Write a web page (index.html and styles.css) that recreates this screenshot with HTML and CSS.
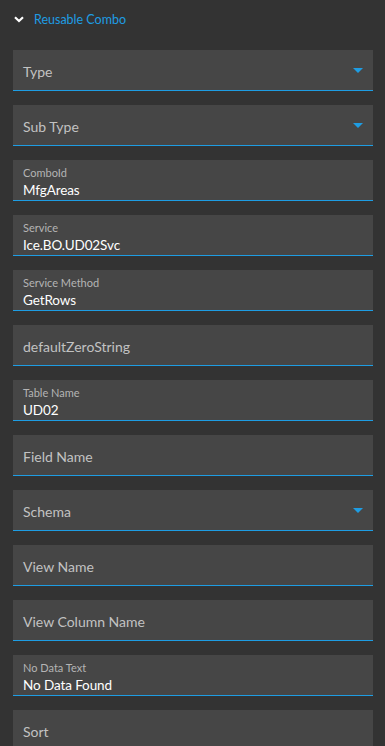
FILE: index.html
```html
<!DOCTYPE HTML>
<html>
	<head>
		<title>Reusable Combo</title>
		<meta name="viewport" content="width=device-width,initial-scale=1.0">
		<link rel="stylesheet" href="styles.css">
	</head>
	<body>
		<!-- Panel -->
		<div id="panel">
			<div class="head">
				<svg class="chev" width="10" height="7" viewBox="0 0 10 7"><path d="M1 1.2 L5 5 L9 1.2" fill="none" stroke="#fff" stroke-width="2.2"/></svg>
				<span class="title">Reusable Combo</span>
			</div>
			<div class="fields">
				<div class="field select"><span class="ph">Type</span><i class="caret"></i></div>
				<div class="field select"><span class="ph">Sub Type</span><i class="caret"></i></div>
				<div class="field filled"><span class="lbl">ComboId</span><span class="val">MfgAreas</span></div>
				<div class="field filled"><span class="lbl">Service</span><span class="val">Ice.BO.UD02Svc</span></div>
				<div class="field filled"><span class="lbl">Service Method</span><span class="val">GetRows</span></div>
				<div class="field"><span class="ph">defaultZeroString</span></div>
				<div class="field filled"><span class="lbl">Table Name</span><span class="val">UD02</span></div>
				<div class="field"><span class="ph">Field Name</span></div>
				<div class="field select"><span class="ph">Schema</span><i class="caret"></i></div>
				<div class="field"><span class="ph">View Name</span></div>
				<div class="field"><span class="ph">View Column Name</span></div>
				<div class="field filled"><span class="lbl">No Data Text</span><span class="val">No Data Found</span></div>
				<div class="field"><span class="ph">Sort</span></div>
			</div>
		</div>
	</body>
</html>
```
FILE: styles.css
```css
html, body{
	margin: 0;
	height: 100%;
	background: #333333;
	font-family: "Source Sans Pro", Lato, "Noto Sans", sans-serif;
	overflow: hidden;
}
#panel{
	padding: 0 12px 0 13px;
}
#panel .head{
	display: flex;
	align-items: center;
	height: 38px;
	padding-left: 1px;
}
#panel .head .chev{
	margin-right: 10px;
}
#panel .head .title{
	color: #1e9de3;
	font-size: 12.5px;
}
#panel .fields{
	display: flex;
	flex-direction: column;
	gap: 14px;
	margin-top: 12px;
}
.field{
	height: 40px;
	background: #464646;
	border-bottom: 1px solid #1e9de3;
	padding: 0 10px;
	display: flex;
	align-items: center;
	position: relative;
}
.field .ph{
	color: #c2c2c2;
	font-size: 14px;
	padding-top: 3px;
}
.field.filled{
	flex-direction: column;
	align-items: flex-start;
	justify-content: flex-start;
	padding-top: 6px;
	box-sizing: border-box;
	height: 41px;
}
.field .lbl{
	color: #b4b4b4;
	font-size: 11px;
	line-height: 13px;
}
.field .val{
	color: #ffffff;
	font-size: 13.5px;
	line-height: 17px;
	letter-spacing: -0.1px;
	margin-top: 3px;
}
.field .caret{
	margin-left: auto;
	width: 0;
	height: 0;
	border-left: 5px solid transparent;
	border-right: 5px solid transparent;
	border-top: 5px solid #1e9de3;
}
```
